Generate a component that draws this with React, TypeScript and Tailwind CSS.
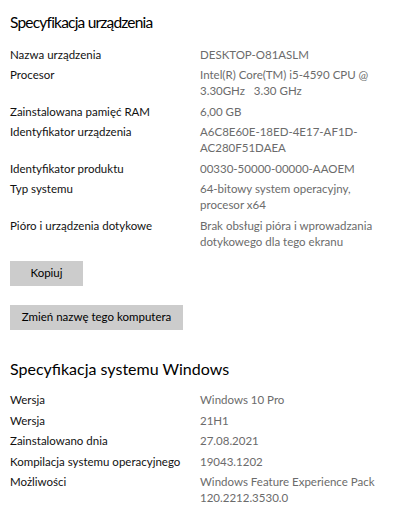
import React from "react";

const font = { fontFamily: 'Lato, "Open Sans", sans-serif' };

type Row = { label: string; value: string[] };

const device: Row[] = [
  { label: "Nazwa urządzenia", value: ["DESKTOP-O81ASLM"] },
  { label: "Procesor", value: ["Intel(R) Core(TM) i5-4590 CPU @", "3.30GHz   3.30 GHz"] },
  { label: "Zainstalowana pamięć RAM", value: ["6,00 GB"] },
  { label: "Identyfikator urządzenia", value: ["A6C8E60E-18ED-4E17-AF1D-", "AC280F51DAEA"] },
  { label: "Identyfikator produktu", value: ["00330-50000-00000-AAOEM"] },
  { label: "Typ systemu", value: ["64-bitowy system operacyjny,", "procesor x64"] },
  { label: "Pióro i urządzenia dotykowe", value: ["Brak obsługi pióra i wprowadzania", "dotykowego dla tego ekranu"] },
];

const windows: Row[] = [
  { label: "Wersja", value: ["Windows 10 Pro"] },
  { label: "Wersja", value: ["21H1"] },
  { label: "Zainstalowano dnia", value: ["27.08.2021"] },
  { label: "Kompilacja systemu operacyjnego", value: ["19043.1202"] },
  { label: "Możliwości", value: ["Windows Feature Experience Pack", "120.2212.3530.0"] },
];

function Rows({ rows }: { rows: Row[] }) {
  return (
    <div className="flex flex-col gap-[4.5px]">
      {rows.map((r, i) => (
        <div key={i} className="flex text-[11.5px] leading-[16px]">
          <div className="w-[190px] shrink-0 text-[#111111]">{r.label}</div>
          <div className="flex flex-col text-[#6b6b6b] whitespace-pre">
            {r.value.map((v, j) => (
              <span key={j}>{v}</span>
            ))}
          </div>
        </div>
      ))}
    </div>
  );
}

export default function App() {
  return (
    <div className="w-[402px] h-[512px] overflow-hidden bg-white px-[10px]" style={font}>
      <h1 className="pt-[10px] text-[15.5px] leading-[24px] tracking-[-0.8px] font-normal text-black">Specyfikacja urządzenia</h1>
      <div className="mt-[12.5px]">
        <Rows rows={device} />
      </div>
      <div className="mt-[11px] flex flex-col gap-[19px]">
        <button className="w-[73px] h-[25px] bg-[#cccccc] text-[11.5px] text-black">Kopiuj</button>
        <button className="w-[173px] h-[25px] bg-[#cccccc] text-[11.5px] text-black">Zmień nazwę tego komputera</button>
      </div>
      <h2 className="mt-[27px] text-[16px] leading-[24px] font-normal text-black">Specyfikacja systemu Windows</h2>
      <div className="mt-[11.5px]">
        <Rows rows={windows} />
      </div>
    </div>
  );
}
